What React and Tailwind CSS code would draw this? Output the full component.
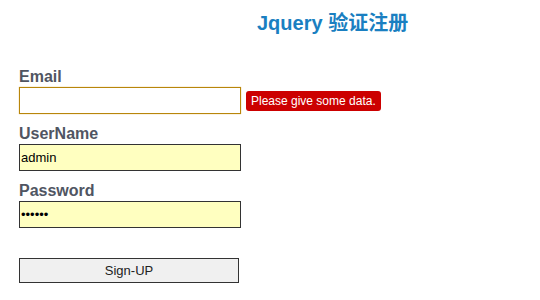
import React from 'react';

const font = { fontFamily: '"Liberation Sans", Arial, "Noto Sans CJK SC", sans-serif' };

function Field({ label, children }) {
  return (
    <div className="mb-[11px]">
      <label className="block text-[16px] leading-[18px] font-bold text-[#505562] mb-px">{label}</label>
      {children}
    </div>
  );
}

export default function App() {
  return (
    <div className="w-[540px] h-[300px] bg-white overflow-hidden" style={font}>
      <h1 className="pt-[12px] pl-[257px] text-[20px] leading-[23px] font-bold text-[#1a7fc1]">
        Jquery 验证注册
      </h1>

      <form className="pl-[19px] pt-[33px]" onSubmit={(e) => e.preventDefault()}>
        <Field label="Email">
          <div className="flex items-center">
            <input
              type="text"
              className="w-[222px] h-[27px] border border-[#b8860b] shadow-[0_0_1px_#e0b050] bg-white px-px text-[13px] text-black outline-none"
            />
            <span className="ml-[5px] h-[20px] px-[5px] rounded-[3px] bg-[#cc0000] text-white text-[12px] leading-[20px]">
              Please give some data.
            </span>
          </div>
        </Field>

        <Field label="UserName">
          <input
            type="text"
            defaultValue="admin"
            className="w-[222px] h-[27px] border border-[#333333] bg-[#ffffc0] px-px text-[13px] text-black outline-none"
          />
        </Field>

        <Field label="Password">
          <input
            type="password"
            defaultValue="123456"
            className="w-[222px] h-[27px] border border-[#333333] bg-[#ffffc0] px-px text-[13px] text-black outline-none"
          />
        </Field>

        <button
          type="submit"
          className="mt-[19px] w-[220px] h-[25px] border border-[#333333] bg-[#f0f0f0] text-[13px] text-[#222222]"
        >
          Sign-UP
        </button>
      </form>
    </div>
  );
}
